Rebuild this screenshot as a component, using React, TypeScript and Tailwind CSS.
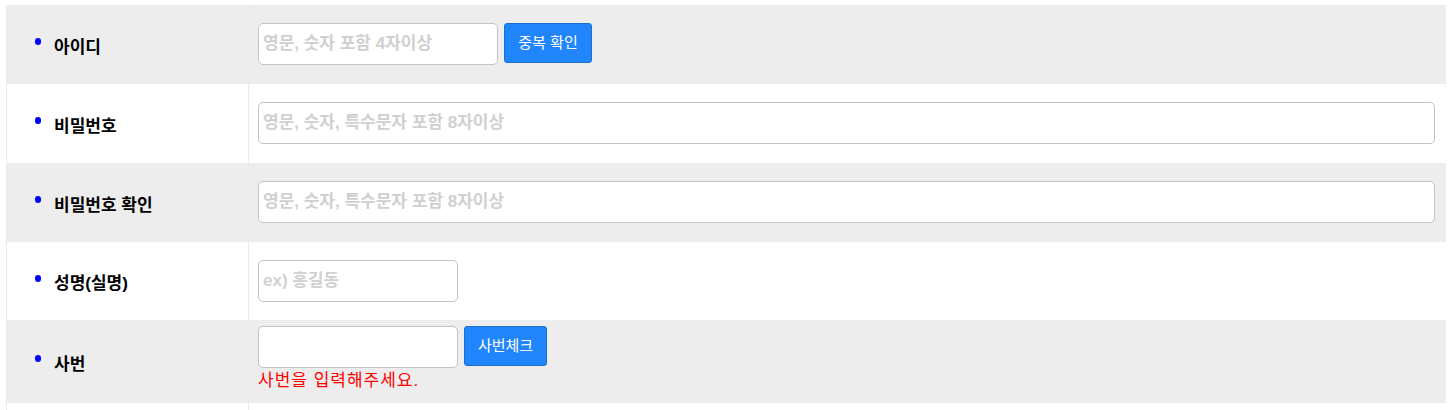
import React from "react";

const font = { fontFamily: '"Liberation Sans", "Noto Sans CJK KR", sans-serif' };

function Label({ text }: { text: string }) {
  return (
    <div className="w-[242px] shrink-0 border-l border-[#ebebeb] flex items-center pl-[28px] pt-[6px]">
      <span className="w-[6px] h-[7px] rounded-full bg-[#0000ff] mb-[12px]" />
      <span className="ml-[13px] text-[17px] font-bold text-black">{text}</span>
    </div>
  );
}

function Input({ placeholder, w }: { placeholder?: string; w: string }) {
  return (
    <input
      placeholder={placeholder}
      className={`${w} h-[42px] border border-[#c3c3c3] rounded-[5px] bg-white pl-[4px] text-[17px] font-bold placeholder:text-[#d0d0d0] outline-none`}
      style={font}
    />
  );
}

function Btn({ text, w }: { text: string; w: string }) {
  return (
    <button
      className={`${w} h-[40px] bg-[#2185fb] border border-[#1d6fd0] rounded-[3px] text-white text-[15px]`}
      style={font}
    >
      {text}
    </button>
  );
}

export default function App() {
  return (
    <div className="bg-white pl-[6px] pt-[5px] w-[1451px] h-[410px] overflow-hidden" style={font}>
      <div className="w-[1440px] flex flex-col">
        <div className="flex h-[79px] bg-[#ededed]">
          <Label text="아이디" />
          <div className="flex-1 border-l border-[#ebebeb] pl-[9px] pr-[11px] pt-[18px]">
            <div className="flex items-start gap-[6px]">
              <Input placeholder="영문, 숫자 포함 4자이상" w="w-[240px]" />
              <Btn text="중복 확인" w="w-[88px]" />
            </div>
          </div>
        </div>
        <div className="flex h-[79px] bg-white">
          <Label text="비밀번호" />
          <div className="flex-1 border-l border-[#ebebeb] pl-[9px] pr-[11px] pt-[18px]">
            <Input placeholder="영문, 숫자, 특수문자 포함 8자이상" w="w-full" />
          </div>
        </div>
        <div className="flex h-[79px] bg-[#ededed]">
          <Label text="비밀번호 확인" />
          <div className="flex-1 border-l border-[#ebebeb] pl-[9px] pr-[11px] pt-[18px]">
            <Input placeholder="영문, 숫자, 특수문자 포함 8자이상" w="w-full" />
          </div>
        </div>
        <div className="flex h-[78px] bg-white">
          <Label text="성명(실명)" />
          <div className="flex-1 border-l border-[#ebebeb] pl-[9px] pr-[11px] pt-[18px]">
            <Input placeholder="ex) 홍길동" w="w-[200px]" />
          </div>
        </div>
        <div className="flex h-[83px] bg-[#ededed]">
          <Label text="사번" />
          <div className="flex-1 border-l border-[#ebebeb] pl-[9px] pr-[11px] pt-[6px] flex flex-col">
            <div className="flex items-start gap-[6px]">
              <Input w="w-[200px]" />
              <Btn text="사번체크" w="w-[83px]" />
            </div>
            <div className="mt-[3px] text-[17px] leading-[20px] tracking-[1px] text-[#ff0000]">사번을 입력해주세요.</div>
          </div>
        </div>
        <div className="flex h-[79px] bg-white">
          <div className="w-[242px] shrink-0 border-l border-[#ebebeb]" />
          <div className="flex-1 border-l border-[#ebebeb]" />
        </div>
      </div>
    </div>
  );
}
